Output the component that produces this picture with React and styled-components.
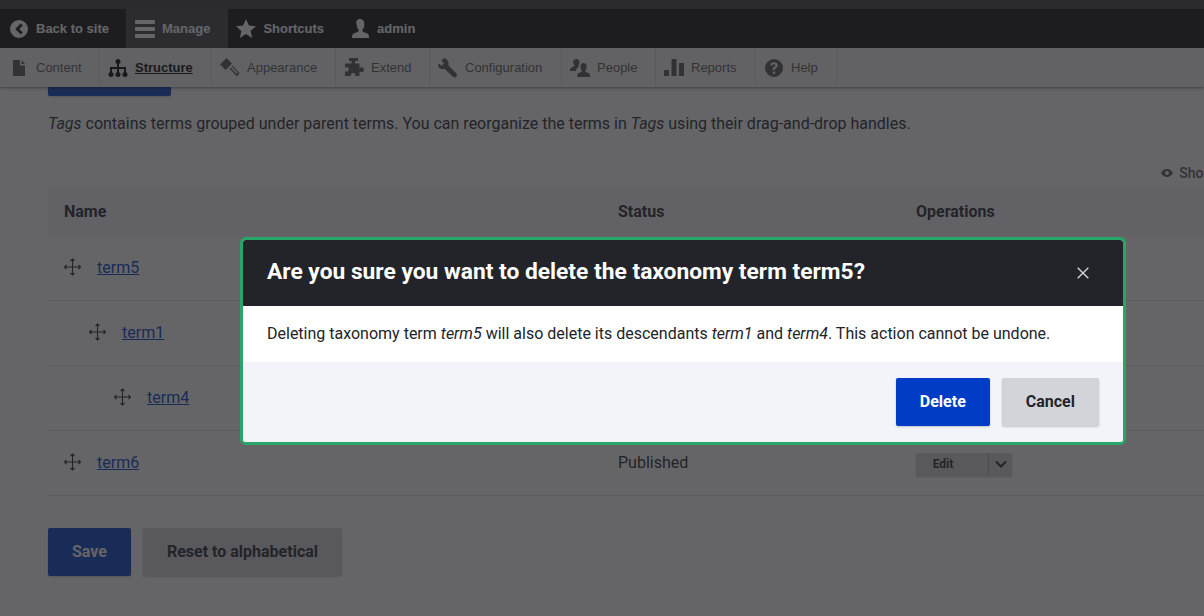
import React from "react";
import styled, { createGlobalStyle } from "styled-components";

const Global = createGlobalStyle`
  html, body { margin: 0; padding: 0; height: 100%; overflow: hidden; background: #fff; }
  body { font-family: Roboto, "Liberation Sans", sans-serif; color: #232429; }
`;

const Page = styled.div`
  width: 1204px;
  height: 616px;
  overflow: hidden;
`;

const TopStrip = styled.div`
  height: 9px;
  background: #3c3d3a;
`;

const Toolbar = styled.nav`
  display: flex;
  height: 39px;
  background: #0f0f0f;
  font: bold 13px "Liberation Sans", Arial, sans-serif;
  color: #fff;
`;

const ToolItem = styled.a`
  display: flex;
  align-items: center;
  gap: ${p => p.$gap || 7}px;
  padding: 0 ${p => p.$right || 18}px 0 ${p => p.$left || 8}px;
  background: ${p => (p.$active ? "#404045" : "transparent")};
  svg { flex: none; }
`;

const Tray = styled.nav`
  position: relative;
  display: flex;
  height: 39px;
  background: #f5f5f2;
  font: 13px "Liberation Sans", Arial, sans-serif;
  color: #565656;
  box-shadow: 0 1px 3px rgba(0, 0, 0, 0.5);
`;

const TrayItem = styled.a`
  flex: 0 0 ${p => p.$width}px;
  box-sizing: border-box;
  display: flex;
  align-items: center;
  gap: 7px;
  padding-left: 8px;
  border-right: 1px solid #d9d9d9;
  color: ${p => (p.$active ? "#000" : "inherit")};
  font-weight: ${p => (p.$active ? "bold" : "normal")};
  text-decoration: ${p => (p.$active ? "underline" : "none")};
  svg { flex: none; }
  &:first-child { padding-left: 9px; }
`;

const Content = styled.main`
  width: 1341px;
  padding: 0 48px;
  box-sizing: border-box;
`;

const Button = styled.button`
  display: block;
  height: 48px;
  padding: 0 24px 2px;
  border: 0;
  border-radius: 2px;
  font: 700 16px Roboto, sans-serif;
  color: ${p => (p.$primary ? "#fff" : "#232429")};
  background: ${p => (p.$primary ? "#003cc5" : "#d3d4d9")};
  box-shadow: 0 1px 2px rgba(0, 0, 0, 0.2);
`;

const ClippedAction = styled(Button)`
  width: 123px;
  margin-top: -39px;
`;

const Intro = styled.p`
  margin: 16px 0 0;
  font-size: 16px;
  line-height: 24px;
`;

const WeightToggle = styled.div`
  display: flex;
  justify-content: flex-end;
  align-items: center;
  gap: 6px;
  height: 20px;
  margin-top: 27px;
  font-size: 14px;
  font-weight: 500;
  color: #55565b;
`;

const Table = styled.div`
  margin-top: 5px;
`;

const Row = styled.div`
  display: grid;
  grid-template-columns: 554px 298px 1fr;
  align-items: center;
  height: 62px;
  padding-bottom: 2px;
  border-bottom: 1px solid #dedfe4;
  font-size: 16px;
`;

const HeadRow = styled(Row)`
  height: 46px;
  padding-bottom: 2px;
  border: 0;
  background: #f3f4f9;
  font-weight: 700;
`;

const Cell = styled.div`
  padding-left: 16px;
`;

const NameCell = styled(Cell)`
  display: flex;
  align-items: center;
  gap: 16px;
  margin-left: ${p => p.$depth * 25}px;
`;

const TermLink = styled.a`
  color: #003cc5;
  text-decoration: underline;
`;

const DropButton = styled.div`
  display: flex;
  width: 96px;
  height: 23px;
  margin-top: 4px;
  border-radius: 2px;
  background: #d3d4d9;
  box-shadow: 0 1px 2px rgba(0, 0, 0, 0.2);
  font-size: 12px;
  font-weight: 700;
`;

const DropLabel = styled.span`
  flex: 1;
  display: flex;
  align-items: center;
  justify-content: center;
  padding: 0 18px 1px 0;
  border-right: 1px solid #a9aab0;
`;

const DropToggle = styled.span`
  display: flex;
  align-items: center;
  justify-content: center;
  width: 23px;
`;

const Actions = styled.div`
  display: flex;
  gap: 12px;
  margin-top: 32px;
`;

const Overlay = styled.div`
  position: fixed;
  inset: 0;
  padding: 237px 0 0 240px;
  background: rgba(35, 35, 40, 0.7);
`;

const Modal = styled.div`
  box-sizing: border-box;
  width: 886px;
  height: 208px;
  border: 3px solid #26a769;
  border-radius: 6px;
  overflow: hidden;
  background: #fff;
`;

const ModalHeader = styled.header`
  display: flex;
  align-items: center;
  justify-content: space-between;
  height: 66px;
  box-sizing: border-box;
  padding: 0 34px 2px 24px;
  background: #232429;
`;

const ModalTitle = styled.h2`
  margin: 0 0 2px;
  font-size: 22.78px;
  font-weight: 700;
  color: #fff;
`;

const CloseButton = styled.button`
  display: flex;
  margin-top: 2px;
  padding: 0;
  border: 0;
  background: transparent;
  color: #d3d4d9;
`;

const ModalBody = styled.div`
  height: 56px;
  box-sizing: border-box;
  padding: 0 24px 2px;
  display: flex;
  align-items: center;
  font-size: 16px;
  white-space: pre;
`;

const ModalFooter = styled.footer`
  display: flex;
  justify-content: flex-end;
  gap: 12px;
  height: 80px;
  padding: 16px 24px 0 0;
  box-sizing: border-box;
  background: #f3f4f9;
`;

const Back = () => (
  <svg width="18" height="18" viewBox="0 0 18 18" fill="currentColor">
    <path fillRule="evenodd" d="M9 0a9 9 0 1 1 0 18A9 9 0 0 1 9 0zM10.800 3.400L5.200 9l5.600 5.600 2-2L9.200 9l3.600-3.600z" />
  </svg>
);
const Bars = () => (
  <svg width="20" height="20" viewBox="0 0 20 20" fill="currentColor">
    <rect y="1" width="20" height="4" rx="1" />
    <rect y="8" width="20" height="4" rx="1" />
    <rect y="15" width="20" height="4" rx="1" />
  </svg>
);
const Star = () => (
  <svg width="20" height="20" viewBox="0 0 20 20" fill="currentColor">
    <path d="M10 0l2.900 6.600 7.100.7-5.400 4.700 1.600 7L10 15l-6.200 4 1.600-7L0 7.300l7.100-.7z" />
  </svg>
);
const User = () => (
  <svg width="20" height="20" viewBox="0 0 20 20" fill="currentColor">
    <path d="M10 0c3 0 4.400 2.400 4.400 5.200 0 2.400-1 4.500-2 5.600-.5.9.1 1.700 1 2.100l4 1.600c1.400.6 1.600 2.300 1.600 4.500H2c0-2.200.2-3.900 1.600-4.500l4-1.600c.9-.4 1.500-1.200 1-2.100-1-1.100-2-3.200-2-5.600C5.600 2.400 7 0 10 0z" />
  </svg>
);
const FileIcon = () => (
  <svg width="20" height="20" viewBox="-2 0 20 20" fill="currentColor">
    <path d="M2 2h7v5.500h5V18H2zM10.500 2L14 6h-3.500z" />
  </svg>
);
const Tree = () => (
  <svg width="20" height="20" viewBox="0 0 20 20" fill="#000">
    <circle cx="10" cy="3.500" r="2.500" />
    <circle cx="3" cy="16.500" r="2.500" />
    <circle cx="10" cy="16.500" r="2.500" />
    <circle cx="17" cy="16.500" r="2.500" />
    <path d="M9 5h2v4h7v6h-2v-4h-5v4H9v-4H4v4H2V9h7z" />
  </svg>
);
const Brush = () => (
  <svg width="20" height="20" viewBox="0 0 20 20" fill="currentColor">
    <path d="M6.500 0L0 6.500l5.500 5.500L12 5.500zM12.500 7.500l7 7.500-2.500 3.500-7.500-8 1.100-1.100 6.200 6.600 1-1.200-6.400-6.700z" />
  </svg>
);
const Puzzle = () => (
  <svg width="20" height="20" viewBox="0 0 20 20" fill="currentColor">
    <path d="M5 0h9v3h-3v2.500h4.500V10c1.500-1.400 4.500-.8 4.500 1.800s-3 3.200-4.500 1.700V18H11c.8-1.500.2-3-1.800-3S6.200 16.500 7 18H1v-5c1.300 1 3.700.6 3.700-1.800S2.300 8.500 1 9.800V5.500h6.500V3H5z" />
  </svg>
);
const Wrench = () => (
  <svg width="20" height="20" viewBox="0 0 20 20" fill="currentColor">
    <path d="M6 0L3.400 2.600l2.600 2.900-2.400 2.300L.7 5.200C-.2 7.600.4 9.500 2 10.600c1.400.9 3 .8 4.400.2l8.800 8.200c.8.700 2.300.7 3.100-.2.900-.8.900-2.200.2-3L10.400 7.300c.6-1.800.2-3.600-1-5C8.100 .8 7.200.2 6 0z" />
  </svg>
);
const People = () => (
  <svg width="20" height="20" viewBox="0 0 20 20" fill="currentColor">
    <path d="M6.500 1c2 0 3 1.600 3 3.400 0 1.300-.4 2.400-1 3.200-.3.500-.1 1 .4 1.300L7.500 10c-1 .7-1.500 1.800-1.500 3H0c0-1.800.2-3 1.400-3.500l2.300-1c.6-.3.800-.8.500-1.300-.7-.9-1.100-2-1.100-3.300C3.100 2.600 4.400 1 6.500 1z" />
    <path d="M13.500 5c2.200 0 3.200 1.700 3.200 3.800 0 1.500-.5 2.700-1.200 3.600-.4.600-.1 1.200.6 1.500l2.400 1c1.300.6 1.500 2 1.500 4.100H7.200c0-2.100.2-3.500 1.500-4.100l2.400-1c.7-.3 1-.9.6-1.500-.7-.9-1.200-2.100-1.200-3.600C10.500 6.700 11.300 5 13.500 5z" />
  </svg>
);
const Reports = () => (
  <svg width="20" height="20" viewBox="0 0 20 20" fill="currentColor">
    <rect y="12" width="5" height="6" />
    <rect x="7.500" y="1" width="5" height="17" />
    <rect x="15" y="5" width="5" height="13" />
  </svg>
);
const Help = () => (
  <svg width="20" height="20" viewBox="0 0 20 20" fill="currentColor">
    <path fillRule="evenodd" d="M10 1a9 9 0 1 1 0 18 9 9 0 0 1 0-18zM8.800 13.500v2.300h2.500v-2.300zM10 4.200c-2.200 0-3.700 1.200-3.800 3.300h2.400c.1-.9.600-1.300 1.400-1.300.8 0 1.300.5 1.300 1.100 0 .7-.4 1-1.100 1.500-1 .7-1.800 1.400-1.700 3.300h2.400c0-1 .3-1.400 1.100-2 1-.7 1.800-1.500 1.800-2.900 0-1.900-1.500-3-3.800-3z" />
  </svg>
);
const Move = () => (
  <svg width="17" height="18" viewBox="0 0 17 18" fill="none" stroke="#232429" strokeWidth="1.100">
    <path d="M8.500 1v16M.5 9h16M6.500 3l2-2 2 2M6.500 15l2 2 2-2M2.500 7l-2 2 2 2M14.500 7l2 2-2 2" />
  </svg>
);
const Eye = () => (
  <svg width="12" height="8" viewBox="0 0 12 8" fill="#55565b">
    <path fillRule="evenodd" d="M6 0c2.700 0 4.800 1.900 6 4-1.200 2.100-3.300 4-6 4S1.200 6.100 0 4c1.200-2.100 3.300-4 6-4zm0 2a2 2 0 1 0 0 4 2 2 0 0 0 0-4z" />
  </svg>
);
const Chevron = () => (
  <svg width="12" height="8" viewBox="0 0 12 8" fill="none" stroke="#232429" strokeWidth="2">
    <path d="M1 1.500l5 5 5-5" />
  </svg>
);
const Close = () => (
  <svg width="12" height="12" viewBox="0 0 12 12" fill="none" stroke="currentColor" strokeWidth="1.400">
    <path d="M.7.7l10.600 10.600M11.300.7L.7 11.300" />
  </svg>
);

const tray = [
  ["Content", FileIcon, 100],
  ["Structure", Tree, 112, true],
  ["Appearance", Brush, 124],
  ["Extend", Puzzle, 94],
  ["Configuration", Wrench, 132],
  ["People", People, 94],
  ["Reports", Reports, 100],
  ["Help", Help, 81],
];

const terms = [
  ["term5", 0],
  ["term1", 1],
  ["term4", 2],
  ["term6", 0],
];

export default function App() {
  return (
    <Page>
      <Global />
      <TopStrip />
      <Toolbar>
        <ToolItem $left={10} $gap={8} $right={17}><Back />Back to site</ToolItem>
        <ToolItem $active $left={9}><Bars />Manage</ToolItem>
        <ToolItem $right={17}><Star />Shortcuts</ToolItem>
        <ToolItem $left={9}><User />admin</ToolItem>
      </Toolbar>
      <Tray>
        {tray.map(([label, Icon, width, active]) => (
          <TrayItem key={label} $width={width} $active={active}><Icon />{label}</TrayItem>
        ))}
      </Tray>
      <Content>
        <ClippedAction $primary>Add term</ClippedAction>
        <Intro>
          <em>Tags</em> contains terms grouped under parent terms. You can reorganize the terms in <em>Tags</em> using their drag-and-drop handles.
        </Intro>
        <WeightToggle><Eye />Show row weights</WeightToggle>
        <Table>
          <HeadRow>
            <Cell>Name</Cell>
            <Cell>Status</Cell>
            <Cell>Operations</Cell>
          </HeadRow>
          {terms.map(([name, depth]) => (
            <Row key={name}>
              <NameCell $depth={depth}><Move /><TermLink>{name}</TermLink></NameCell>
              <Cell>Published</Cell>
              <Cell>
                <DropButton>
                  <DropLabel>Edit</DropLabel>
                  <DropToggle><Chevron /></DropToggle>
                </DropButton>
              </Cell>
            </Row>
          ))}
        </Table>
        <Actions>
          <Button $primary>Save</Button>
          <Button>Reset to alphabetical</Button>
        </Actions>
      </Content>
      <Overlay>
        <Modal>
          <ModalHeader>
            <ModalTitle>Are you sure you want to delete the taxonomy term term5?</ModalTitle>
            <CloseButton aria-label="Close"><Close /></CloseButton>
          </ModalHeader>
          <ModalBody>Deleting taxonomy term <em>term5</em> will also delete its descendants <em>term1</em> and <em>term4</em>. This action cannot be undone.</ModalBody>
          <ModalFooter>
            <Button $primary>Delete</Button>
            <Button>Cancel</Button>
          </ModalFooter>
        </Modal>
      </Overlay>
    </Page>
  );
}
